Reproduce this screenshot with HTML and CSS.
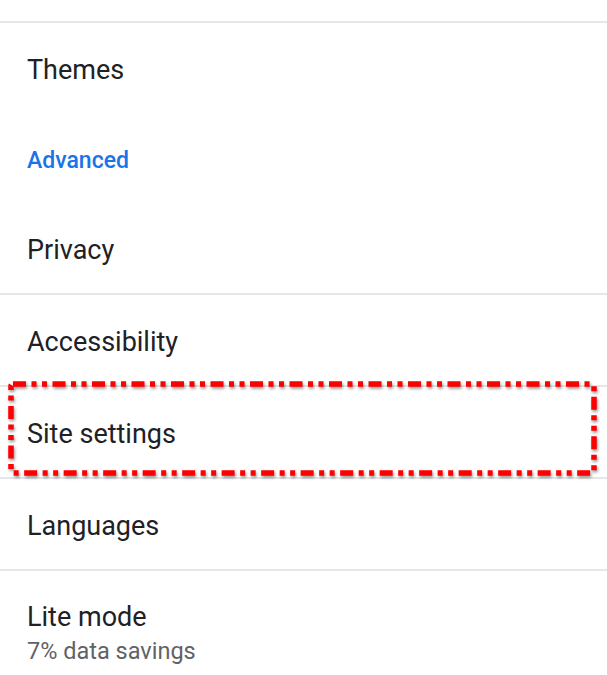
FILE: index.html
```html
<!DOCTYPE html>
<html lang="en">
<head>
    <meta charset="UTF-8">
    <meta name="viewport" content="width=device-width, initial-scale=1.0">
    <title>Settings</title>
    <link rel="stylesheet" href="styles.css">
</head>
<body>
    <div class="settings">
        <div class="top-space"></div>
        <div class="divider"></div>
        <div class="row">Themes</div>
        <div class="row section">Advanced</div>
        <div class="row">Privacy</div>
        <div class="divider"></div>
        <div class="row">Accessibility</div>
        <div class="divider"></div>
        <div class="row marked">
            Site settings
            <svg class="highlight" width="590" height="96" viewBox="0 0 590 96">
                <rect x="3" y="3" width="583" height="89" rx="2"
                      fill="none" stroke="#ff0000" stroke-width="5.5"
                      stroke-dasharray="13 5.5 5 5.5 5 5.5" />
            </svg>
        </div>
        <div class="divider"></div>
        <div class="row">Languages</div>
        <div class="divider"></div>
        <div class="row two-line">
            <div class="title">Lite mode</div>
            <div class="summary">7% data savings</div>
        </div>
    </div>
</body>
</html>
```

FILE: styles.css
```css
body {
    margin: 0;
    background-color: #ffffff;
    font-family: Roboto, "Noto Sans", sans-serif;
    color: #202124;
}
.settings {
    display: flex;
    flex-direction: column;
}
.top-space {
    height: 21px;
}
.divider {
    height: 2px;
    background-color: #e6e6e6;
}
.row {
    box-sizing: border-box;
    height: 90px;
    display: flex;
    align-items: center;
    padding-left: 27px;
    padding-top: 4px;
    font-size: 27px;
}
.row.section {
    font-size: 23px;
    font-weight: 500;
    color: #1a73e8;
}
.row.marked {
    position: relative;
}
.highlight {
    position: absolute;
    left: 8px;
    top: -6px;
    pointer-events: none;
    filter: drop-shadow(1px 2px 1.5px rgba(0, 0, 0, 0.4));
}
.row.two-line {
    flex-direction: column;
    align-items: flex-start;
    justify-content: flex-start;
    padding-top: 30px;
    height: auto;
}
.title {
    font-size: 27px;
    line-height: 32px;
}
.summary {
    margin-top: 4px;
    font-size: 23.5px;
    line-height: 28px;
    color: #5f6368;
}
```
